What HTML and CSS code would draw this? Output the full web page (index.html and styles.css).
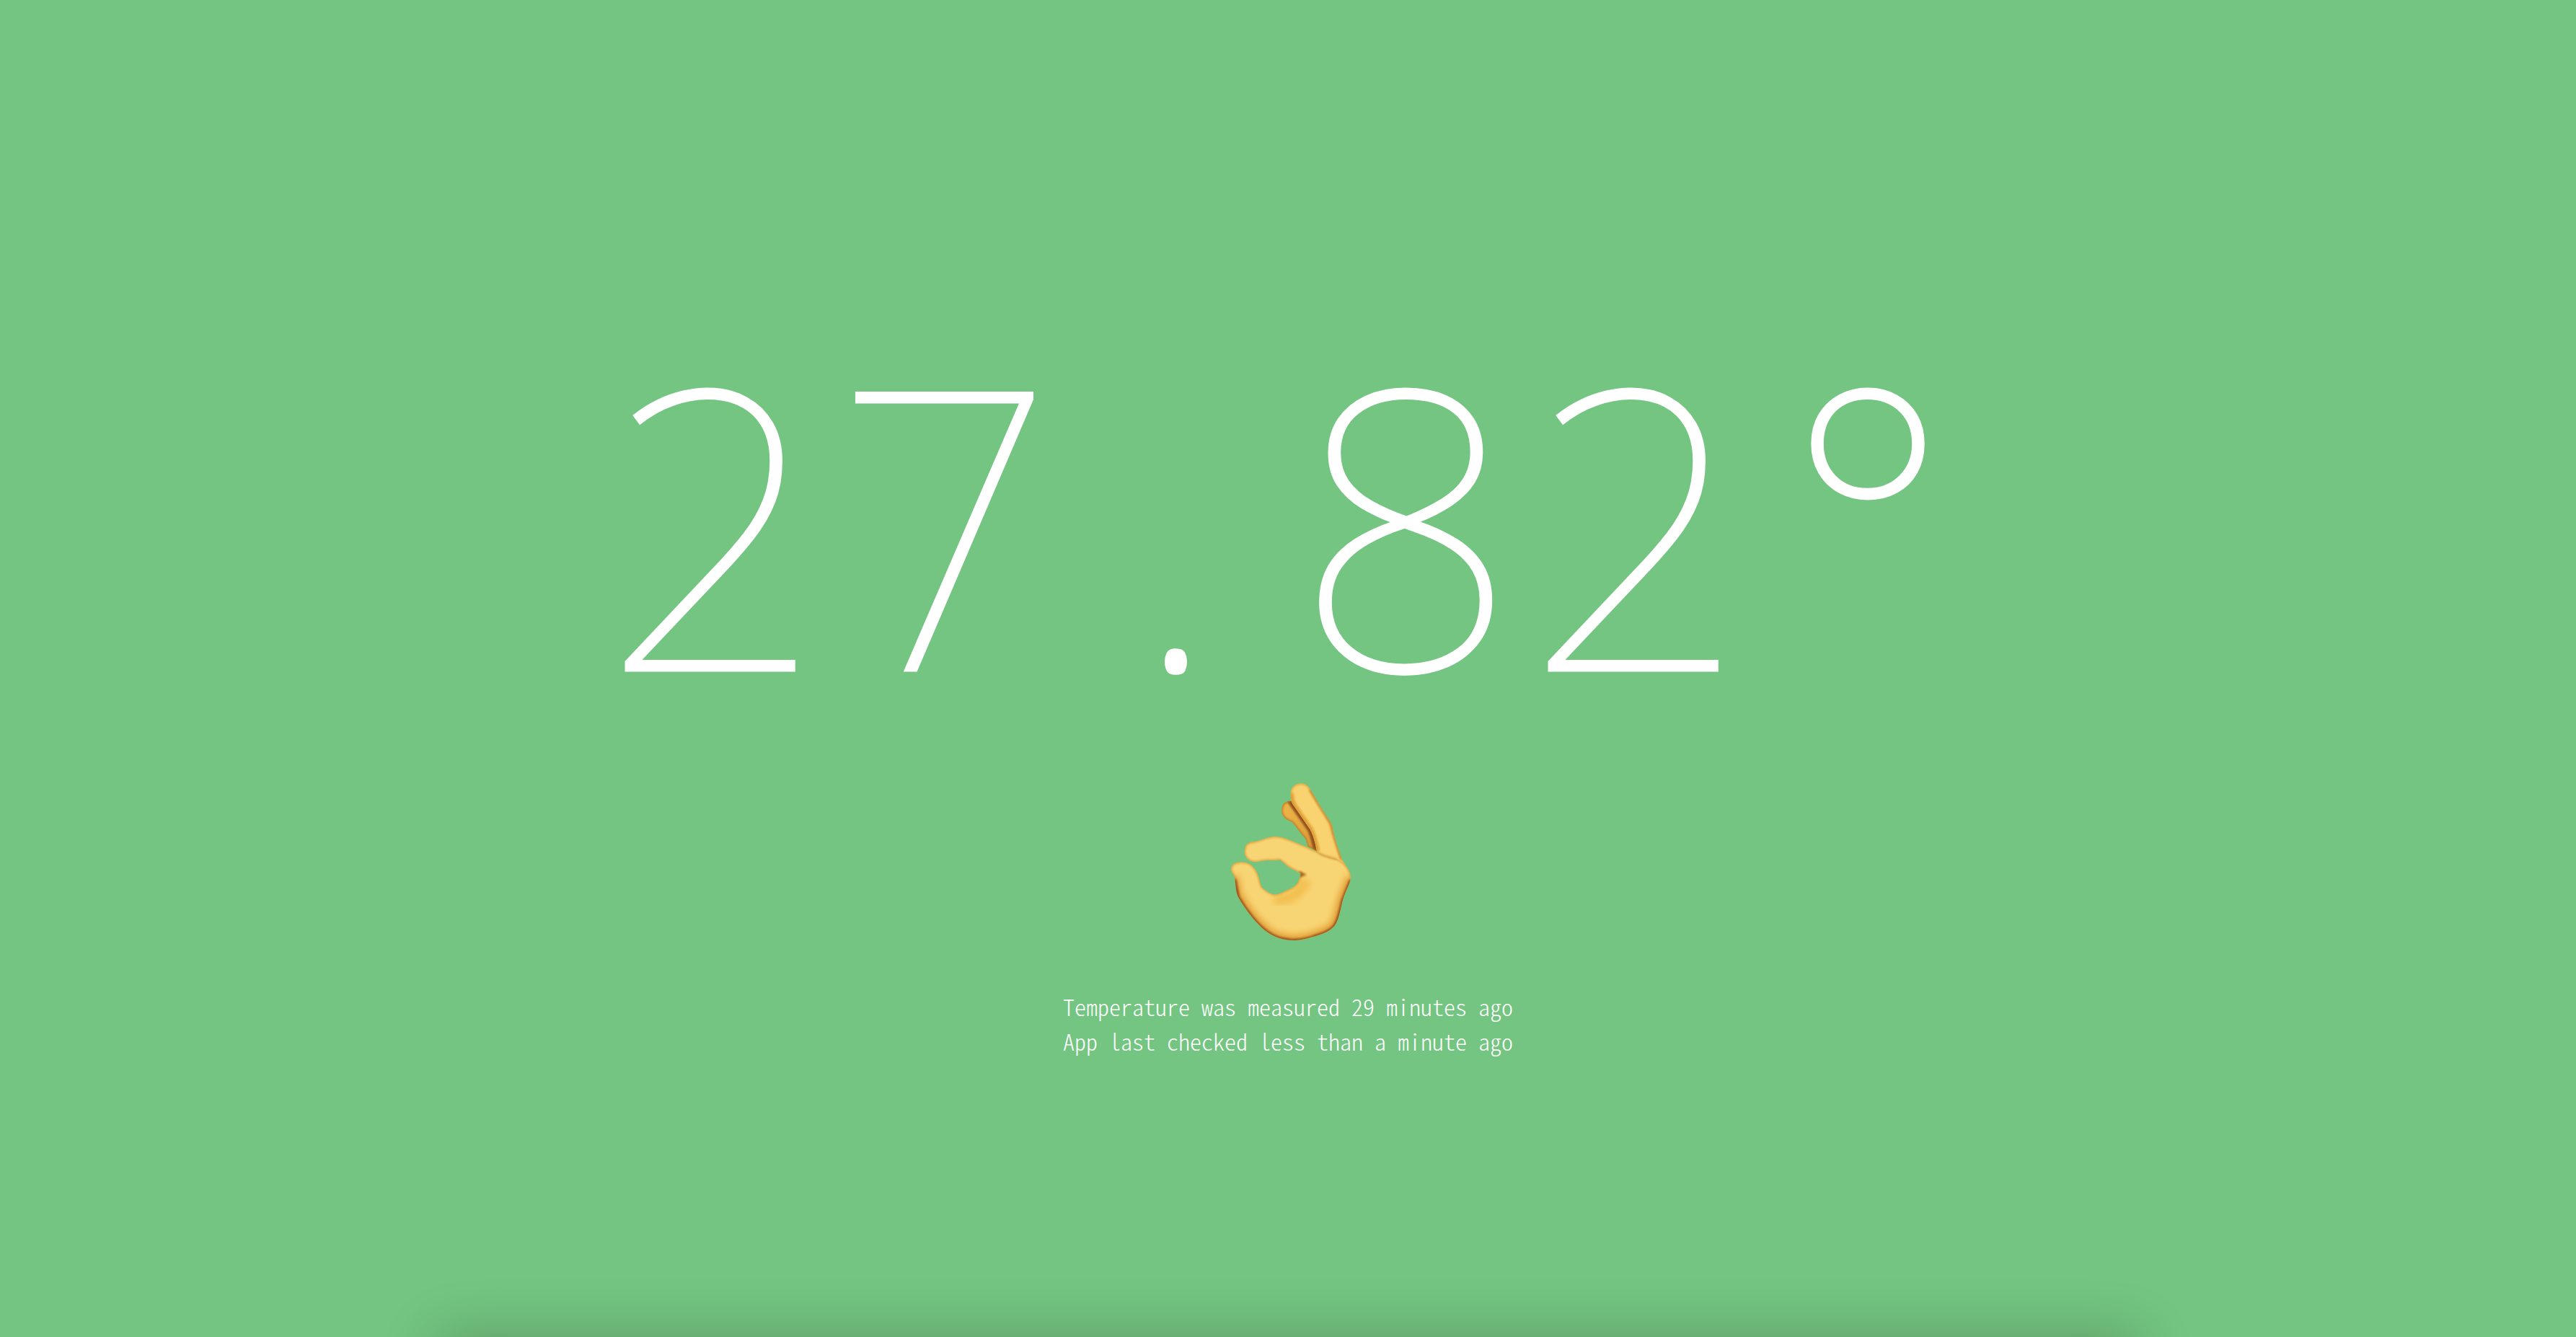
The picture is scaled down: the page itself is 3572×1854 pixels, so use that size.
FILE: index.html
```
<!DOCTYPE html>
<html lang="en">
<head>
<meta charset="utf-8">
<meta name="viewport" content="width=device-width, initial-scale=1">
<title>Temperature</title>
<link rel="stylesheet" href="styles.css">
</head>
<body>
<main class="screen">
  <h1 class="temperature"><span class="cell">2</span><span class="cell">7</span><span class="cell">.</span><span class="cell">8</span><span class="cell">2</span><span class="cell">°</span></h1>
  <svg class="hand" viewBox="18 68 720 720" role="img" aria-label="OK hand">
    <defs>
      <linearGradient id="back" x1="0" y1="0" x2="1" y2="1">
        <stop offset="0" stop-color="#eeb649"/><stop offset="1" stop-color="#d99a35"/>
      </linearGradient>
      <path id="rear" d="M352 208C353 190 366 176 384 175C402 174 415 184 430 205L500 300L512 390L462 366C455 352 454 332 446 326C430 312 414 282 394 262C378 256 366 250 359 240C353 231 350 220 352 208Z"/>
      <path id="fingers" d="M389 142C390 116 411 101 432 102C450 102 462 112 471 127L512 197L555 264C564 278 563 292 567 306C575 340 588 380 603 418L624 452L560 470L498 384C492 356 484 320 470 294L404 198C391 180 388 162 389 142Z"/>
      <path id="palm" d="M197 383C198 359 212 346 232 345C262 341 298 322 326 323C354 323 376 334 400 343L462 369L530 402L580 416C606 424 639 460 639 492C637 520 614 556 605 590C595 632 588 674 570 696C552 716 528 726 500 735C466 744 438 755 404 755C362 755 326 744 294 722C248 690 200 625 171 575C159 552 161 520 156 492C148 478 141 468 141 458C142 438 158 430 180 429C208 427 230 440 243 462C260 488 259 512 268 532C284 548 304 562 322 564C342 564 356 553 374 546C400 536 418 522 423 505C426 495 430 490 430 475C408 464 382 456 362 434L344 420C322 424 302 422 286 422C268 424 252 429 240 429C212 427 196 407 197 383Z"/>
      <clipPath id="rear-clip"><use href="#rear"/></clipPath>
      <clipPath id="fingers-clip"><use href="#fingers"/></clipPath>
      <clipPath id="palm-clip"><use href="#palm"/></clipPath>
      <filter id="soft" x="-20%" y="-20%" width="140%" height="140%"><feGaussianBlur stdDeviation="5"/></filter>
      <filter id="softer" x="-30%" y="-30%" width="160%" height="160%"><feGaussianBlur stdDeviation="14"/></filter>
    </defs>
    <g clip-path="url(#rear-clip)">
      <use href="#rear" fill="url(#back)"/>
      <path d="M384 170L470 292C484 320 488 350 498 390" fill="none" stroke="#8f4e1d" stroke-width="24" filter="url(#soft)"/>
      <use href="#rear" fill="none" stroke="#b9711f" stroke-width="8" filter="url(#soft)"/>
    </g>
    <g clip-path="url(#fingers-clip)">
      <use href="#fingers" fill="#f8d370"/>
      <path d="M389 142C388 164 394 182 404 198L470 294C484 320 492 356 498 384" fill="none" stroke="#e3a63c" stroke-width="26" filter="url(#soft)"/>
      <path d="M471 127L555 264C562 278 563 292 567 306L603 418" fill="none" stroke="#c27c28" stroke-width="14" filter="url(#soft)"/>
      <use href="#fingers" fill="none" stroke="#e0a03a" stroke-width="8" filter="url(#soft)"/>
    </g>
    <g clip-path="url(#palm-clip)">
      <use href="#palm" fill="#f8d574"/>
      <path d="M320 584C370 590 430 570 452 500" fill="none" stroke="#f2bf50" stroke-width="46" filter="url(#softer)"/>
      <path d="M150 490C160 540 160 560 171 575C200 625 248 690 294 722C350 762 430 764 500 735C528 726 552 716 570 696C588 674 595 632 605 590C614 556 637 520 639 492" fill="none" stroke="#e2a038" stroke-width="46" filter="url(#softer)"/>
      <use href="#palm" fill="none" stroke="#dc9a35" stroke-width="8" filter="url(#soft)"/>
      <path d="M156 500L171 575C200 625 248 690 294 722C350 762 430 764 500 735C528 726 552 716 570 696C588 674 595 632 605 590L639 505" fill="none" stroke="#96501a" stroke-width="13" filter="url(#soft)"/>
      <path d="M426 466L456 482L424 494Z" fill="#a8641f" filter="url(#soft)"/>
    </g>
    <path d="M510 393C536 407 558 408 582 417" fill="none" stroke="#c98a30" stroke-width="4" filter="url(#soft)"/>
  </svg>
  <div class="status">
    <p>Temperature was measured 29 minutes ago</p>
    <p>App last checked less than a minute ago</p>
  </div>
</main>
</body>
</html>
```
FILE: styles.css
```
body {
  margin: 0;
  background: #73c581;
  color: #fff;
}

.screen {
  position: relative;
  box-sizing: border-box;
  display: flex;
  flex-direction: column;
  align-items: center;
  justify-content: center;
  min-height: 100vh;
  padding-top: 4px;
  overflow: hidden;
}

/* soft shade rising from the bottom edge */
.screen::after {
  content: "";
  position: absolute;
  top: 100%;
  left: 17%;
  right: 17%;
  height: 240px;
  box-shadow: 0 0 80px rgba(0, 0, 0, 0.22);
}

.temperature {
  display: flex;
  margin: 0;
  padding-left: 8px;
  font-family: "Noto Sans", sans-serif;
  font-size: 540px;
  font-weight: 100;
  line-height: 660px;
  -webkit-text-stroke: 3px #fff;
}

.cell {
  width: 320px;
  text-align: center;
}

.hand {
  width: 240px;
  height: 240px;
  margin-top: 24px;
}

.status {
  margin-top: 56px;
  font-family: "Noto Sans CJK JP", sans-serif;
  font-feature-settings: "hwid";
  font-size: 32px;
  font-weight: 300;
  line-height: 48px;
}

.status p {
  margin: 0;
}
```
